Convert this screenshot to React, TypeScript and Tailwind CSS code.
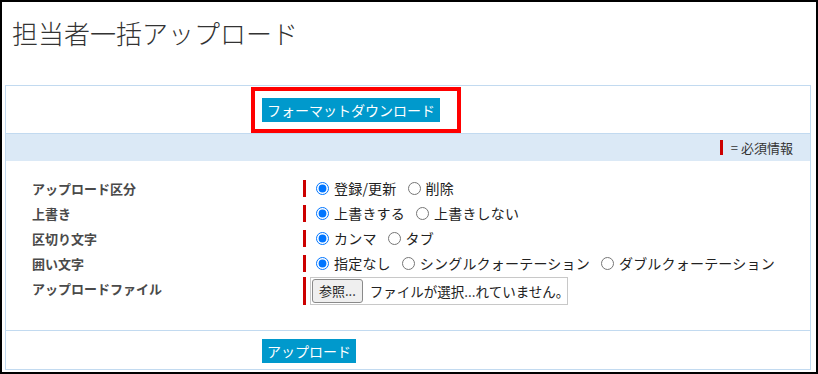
import React from 'react';

const FONT = "font-['Noto_Sans_CJK_JP','Noto_Sans',sans-serif]";

type Opt = { label: string; checked?: boolean };

const RadioGroup: React.FC<{ name: string; options: Opt[] }> = ({ name, options }) => (
  <div className="flex items-center h-[17px] border-l-[3px] border-[#cc0000]">
    {options.map((o, i) => (
      <label key={o.label} className={`flex items-center ${i === 0 ? 'ml-[10px]' : 'ml-[11px]'}`}>
        <input
          type="radio"
          name={name}
          defaultChecked={o.checked}
          className="w-[13px] h-[13px] mr-[5px]"
        />
        <span className="text-[14px] leading-[17px] text-[#222] tracking-[0.2px]">{o.label}</span>
      </label>
    ))}
  </div>
);

const rows: { label: string; name: string; options: Opt[] }[] = [
  { label: 'アップロード区分', name: 'kubun', options: [{ label: '登録/更新', checked: true }, { label: '削除' }] },
  { label: '上書き', name: 'uwagaki', options: [{ label: '上書きする', checked: true }, { label: '上書きしない' }] },
  { label: '区切り文字', name: 'kugiri', options: [{ label: 'カンマ', checked: true }, { label: 'タブ' }] },
  {
    label: '囲い文字',
    name: 'kakoi',
    options: [
      { label: '指定なし', checked: true },
      { label: 'シングルクォーテーション' },
      { label: 'ダブルクォーテーション' },
    ],
  },
];

const App: React.FC = () => {
  return (
    <div className={`relative w-[818px] h-[374px] border-2 border-black bg-white text-[#333] ${FONT}`}>
      {/* title */}
      <div className="h-[83px] pl-[10px] pt-[15px]">
        <h1 className="text-[26px] leading-[32px] font-light text-[#333]">担当者一括アップロード</h1>
      </div>

      {/* panel */}
      <div className="ml-[3px] w-[806px] h-[285px] border border-[#c2daf0] flex flex-col">
        <div className="h-[48px] border-b border-[#c2daf0] pl-[256px] pt-[11px]">
          <button className="h-[24px] px-[5px] bg-[#0099cc] text-white text-[14px] leading-[24px]">
            フォーマットダウンロード
          </button>
        </div>

        <div className="h-[27px] bg-[#dbe9f6] flex items-center justify-end pr-[17px]">
          <span className="w-[3px] h-[15px] bg-[#cc0000] mr-[8px]" />
          <span className="text-[13px] leading-[15px] text-[#333]">= 必須情報</span>
        </div>

        <div className="h-[170px] border-b border-[#c2daf0] pt-[15px]">
          {rows.map((r) => (
            <div key={r.name} className="flex items-center h-[25px]">
              <div className="w-[297px] pl-[26px] text-[13px] font-bold text-[#4a4a4a] leading-[17px]">{r.label}</div>
              <RadioGroup name={r.name} options={r.options} />
            </div>
          ))}
          <div className="flex items-start h-[30px] pt-[1px]">
            <div className="w-[297px] pl-[26px] pt-[3px] text-[13px] font-bold text-[#4a4a4a] leading-[17px]">
              アップロードファイル
            </div>
            <div className="flex items-center h-[28px] border-l-[3px] border-[#cc0000]">
              <div className="ml-[4px] w-[258px] h-[28px] border border-[#c8c8c8] flex items-center px-[1px] overflow-hidden">
                <span className="shrink-0 whitespace-nowrap h-[24px] px-[6px] flex items-center rounded-[3px] border border-[#8a8a8a] bg-[#efefef] text-[13px] text-[#222]">
                  参照...
                </span>
                <span className="ml-[7px] text-[13.5px] text-[#222] leading-[17px] whitespace-nowrap">
                  ファイルが選択...れていません。
                </span>
              </div>
            </div>
          </div>
        </div>

        <div className="flex-1 pl-[256px] pt-[7px]">
          <button className="h-[24px] px-[5px] bg-[#0099cc] text-white text-[14px] leading-[24px]">
            アップロード
          </button>
        </div>
      </div>

      {/* annotation frame */}
      <div className="absolute left-[249px] top-[85px] w-[210px] h-[46px] border-4 border-[#ff0000] pointer-events-none" />
    </div>
  );
};

export default App;
